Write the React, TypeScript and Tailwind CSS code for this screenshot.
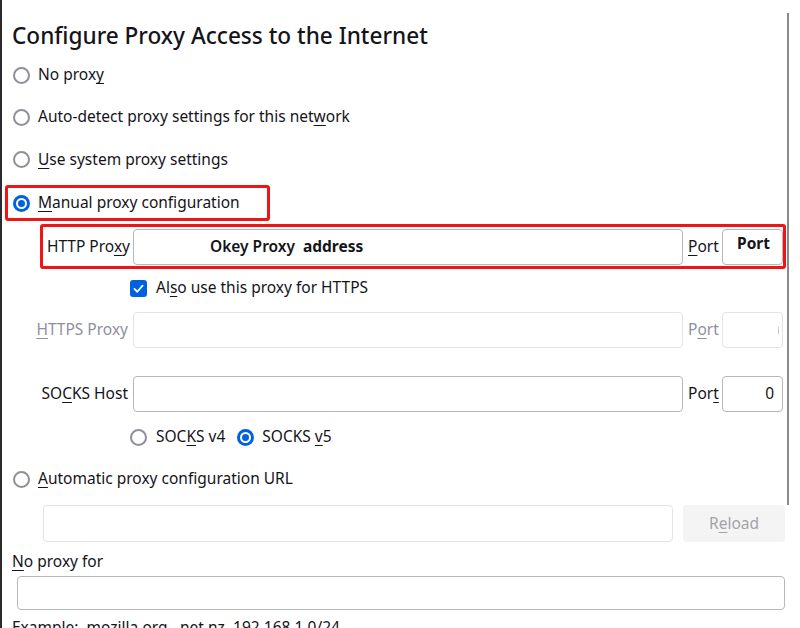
import React from "react";

const F = { fontFamily: '"Noto Sans", "Open Sans", sans-serif' };

function U({ children }: { children: React.ReactNode }) {
  return <span className="underline underline-offset-[3px] decoration-1">{children}</span>;
}

function Radio({ checked = false }: { checked?: boolean }) {
  return checked ? (
    <span className="flex h-[17px] w-[17px] shrink-0 items-center justify-center rounded-full bg-[#0061e0]">
      <span className="h-[11px] w-[11px] rounded-full border-[2px] border-white bg-[#0061e0]" />
    </span>
  ) : (
    <span className="h-[17px] w-[17px] shrink-0 rounded-full border-[2px] border-[#8f8f9d] bg-white" />
  );
}

function Checkbox() {
  return (
    <span className="flex h-[17px] w-[17px] shrink-0 items-center justify-center rounded-[3px] bg-[#0061e0]">
      <svg width="13" height="13" viewBox="0 0 16 16">
        <path d="M3 8.5 L6.5 12 L13 4.5" fill="none" stroke="white" strokeWidth="2.2" strokeLinecap="round" strokeLinejoin="round" />
      </svg>
    </span>
  );
}

export default function App() {
  return (
    <div className="flex h-[628px] w-[800px] overflow-hidden bg-white text-[15.5px] text-[#15141a]" style={F}>
      <div className="w-[2px] shrink-0 bg-[#2b2b2b]" />
      <div className="flex w-[784px] shrink-0 flex-col">
        <h1 className="mt-[21px] h-[30px] shrink-0 pl-[10px] text-[22.6px] font-medium leading-[30px]">
          Configure Proxy Access to the Internet
        </h1>

        <div className="mt-[3px] flex h-[42px] shrink-0 items-center gap-[8px] pl-[11px]">
          <Radio />
          <span>No prox<U>y</U></span>
        </div>
        <div className="flex h-[42px] shrink-0 items-center gap-[8px] pl-[11px]">
          <Radio />
          <span>Auto-detect proxy settings for this net<U>w</U>ork</span>
        </div>
        <div className="flex h-[43px] shrink-0 items-center gap-[8px] pl-[11px]">
          <Radio />
          <span><U>U</U>se system proxy settings</span>
        </div>
        <div className="mt-[1px] flex h-[42px] shrink-0 items-center">
          <div className="ml-[3px] flex h-[36px] w-[265px] items-center gap-[8px] rounded-[3px] border-[3px] border-[#f01414] pl-[5px]">
            <Radio checked />
            <span><U>M</U>anual proxy configuration</span>
          </div>
        </div>

        <div className="mt-[0px] ml-[38px] flex h-[45px] shrink-0 items-center rounded-[3px] border-[3px] border-[#f01414]">
          <span className="w-[87px] shrink-0 text-right">HTTP Pro<U>x</U>y</span>
          <div className="ml-[3px] flex h-[36px] w-[550px] shrink-0 items-center rounded-[4px] border border-[#b8b8bc] pl-[76px]">
            <span className="font-semibold">Okey Proxy</span>
            <span className="ml-[8px] font-bold">address</span>
          </div>
          <span className="ml-[5px] w-[29px] shrink-0"><U>P</U>ort</span>
          <div className="ml-[5px] flex h-[36px] w-[61px] shrink-0 items-start rounded-[4px] border border-[#b8b8bc] pl-[14px] pt-[2px]">
            <span className="font-bold">Port</span>
          </div>
        </div>

        <div className="flex h-[38px] shrink-0 items-center gap-[9px] pl-[128px]">
          <Checkbox />
          <span>Al<U>s</U>o use this proxy for HTTPS</span>
        </div>

        <div className="mt-[4px] flex h-[38px] shrink-0 items-center text-[#8f8f9d]">
          <span className="w-[126px] shrink-0 text-right"><U>H</U>TTPS Proxy</span>
          <div className="ml-[5px] h-[36px] w-[550px] shrink-0 rounded-[4px] border border-[#e3e3e6]" />
          <span className="ml-[5px] w-[29px] shrink-0">P<U>o</U>rt</span>
          <div className="ml-[5px] flex h-[36px] w-[61px] shrink-0 items-center justify-end overflow-hidden rounded-[4px] border border-[#e3e3e6] pr-[3px]">
            <span className="h-[7px] w-[1px] bg-[#c8c8cc]" />
          </div>
        </div>

        <div className="mt-[26px] flex h-[38px] shrink-0 items-center">
          <span className="w-[126px] shrink-0 text-right">SO<U>C</U>KS Host</span>
          <div className="ml-[5px] h-[36px] w-[550px] shrink-0 rounded-[4px] border border-[#b8b8bc]" />
          <span className="ml-[5px] w-[29px] shrink-0">Por<U>t</U></span>
          <div className="ml-[5px] flex h-[36px] w-[61px] shrink-0 items-center justify-end rounded-[4px] border border-[#b8b8bc] pr-[8px]">
            0
          </div>
        </div>

        <div className="mt-[2px] flex h-[44px] shrink-0 items-center pl-[128px]">
          <Radio />
          <span className="ml-[9px]">SOC<U>K</U>S v4</span>
          <span className="ml-[12px]"><Radio checked /></span>
          <span className="ml-[8px]">SOCKS <U>v</U>5</span>
        </div>

        <div className="flex h-[40px] shrink-0 items-center gap-[8px] pl-[11px]">
          <Radio />
          <span><U>A</U>utomatic proxy configuration URL</span>
        </div>

        <div className="mt-[6px] flex h-[37px] shrink-0 items-center">
          <div className="ml-[41px] h-[37px] w-[630px] shrink-0 rounded-[4px] border border-[#e3e3e6]" />
          <div className="ml-[10px] flex h-[37px] w-[102px] shrink-0 items-center justify-center rounded-[4px] bg-[#f4f4f5] text-[#a3a3a8]">
            R<U>e</U>load
          </div>
        </div>

        <div className="mt-[8px] flex h-[24px] shrink-0 items-center pl-[10px]">
          <span><U>N</U>o proxy for</span>
        </div>
        <div className="mt-[2px] ml-[15px] h-[34px] w-[768px] shrink-0 rounded-[4px] border border-[#b8b8bc]" />
        <div className="mt-[5px] shrink-0 pl-[10px] leading-[24px]">Example: .mozilla.org, .net.nz, 192.168.1.0/24</div>
      </div>
      <div className="ml-[1px] mt-[13px] h-[492px] w-[2px] shrink-0 bg-[#8a8a8a]" />
    </div>
  );
}
